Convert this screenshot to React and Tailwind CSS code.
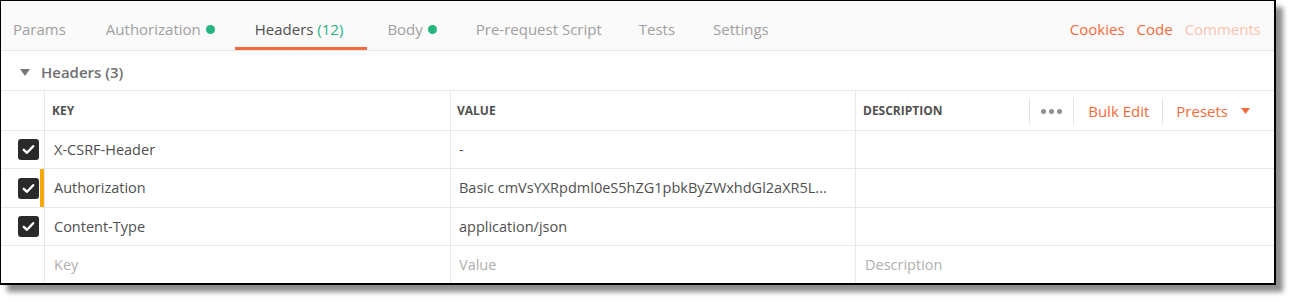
import React from "react";

function Check() {
  return (
    <div className="w-[21px] h-[21px] rounded-[3px] bg-[#2a2a2a] flex items-center justify-center">
      <svg width="13" height="11" viewBox="0 0 13 11">
        <path d="M1.8 5.8 L5 8.8 L11.2 2.2" fill="none" stroke="#fff" strokeWidth="2.4" strokeLinecap="round" strokeLinejoin="round" />
      </svg>
    </div>
  );
}

function Tab({ children, active, dot, className = "px-[20px]" }) {
  return (
    <div className={"relative h-full flex items-center pt-[8px] " + className}>
      <span className={"flex items-center gap-[5px] " + (active ? "text-[#505050]" : "text-[#a0a0a0]")}>
        {children}
        {dot && <span className="inline-block w-[9px] h-[9px] rounded-full bg-[#26b47f]" />}
      </span>
      {active && <div className="absolute left-0 right-0 bottom-0 h-[3px] bg-[#f26b3a]" />}
    </div>
  );
}

function Row({ keyText, value, marker, placeholder, h }) {
  return (
    <div className={"flex " + h}>
      <div className="relative w-[44px] border-r border-[#e8e8e8] flex items-center pl-[17px]">
        {!placeholder && <Check />}
        {marker && <div className="absolute right-0 top-0 bottom-0 w-[4px] bg-[#f5a80c]" />}
      </div>
      <div className={"w-[406px] border-r border-[#e8e8e8] flex items-center pl-[9px] " + (placeholder ? "text-[#b0b0b0]" : "text-[#505050]")}>
        {keyText}
      </div>
      <div className={"w-[405px] border-r border-[#e8e8e8] flex items-center pl-[8px] whitespace-nowrap overflow-hidden " + (placeholder ? "text-[#b0b0b0]" : "text-[#505050]")}>
        {value}
      </div>
      <div className="flex-1 flex items-center pl-[9px] text-[#b0b0b0]">
        {placeholder ? "Description" : ""}
      </div>
    </div>
  );
}

export default function App() {
  return (
    <div className="w-[1291px] h-[300px] bg-white font-['Open_Sans',sans-serif]">
      <div className="w-[1276px] h-[285px] border-t border-l border-r-2 border-b-2 border-black bg-white shadow-[7px_7px_5px_rgba(0,0,0,0.45)] flex flex-col">
        {/* Tab bar */}
        <div className="h-[50px] shrink-0 bg-[#fafafa] border-b border-[#e6e6e6] flex items-stretch text-[15px]">
          <div className="flex items-stretch -ml-[8px]">
            <Tab>Params</Tab>
            <Tab dot>Authorization</Tab>
            <Tab active className="pl-[20px] pr-[24px]">
              <span>
                Headers <span className="text-[#26b47f]">(12)</span>
              </span>
            </Tab>
            <Tab dot>Body</Tab>
            <Tab className="pl-[19px] pr-[18px]">Pre-request Script</Tab>
            <Tab className="px-[19px]">Tests</Tab>
            <Tab className="px-[19px]">Settings</Tab>
          </div>
          <div className="ml-auto flex items-center pt-[8px] pr-[13px] gap-[12px]">
            <span className="text-[#f26b3a]">Cookies</span>
            <span className="text-[#f26b3a]">Code</span>
            <span className="text-[#f8c4ae]">Comments</span>
          </div>
        </div>

        {/* Section header */}
        <div className="h-[40px] shrink-0 border-b border-[#e8e8e8] flex items-center pt-[3px] pl-[19px] gap-[11px]">
          <svg width="10" height="7" viewBox="0 0 10 7">
            <path d="M0 0 L10 0 L5 7 Z" fill="#777" />
          </svg>
          <span className="text-[15px] font-semibold text-[#707070]">Headers (3)</span>
        </div>

        {/* Table header */}
        <div className="h-[40px] shrink-0 border-b border-[#e8e8e8] flex text-[12px] font-bold text-[#505050]">
          <div className="w-[44px] border-r border-[#e8e8e8]" />
          <div className="w-[406px] border-r border-[#e8e8e8] flex items-center pl-[7px] pt-[1px]">KEY</div>
          <div className="w-[405px] border-r border-[#e8e8e8] flex items-center pl-[6px] pt-[1px]">VALUE</div>
          <div className="flex-1 flex items-center pl-[7px] pt-[1px]">
            <span>DESCRIPTION</span>
            <div className="ml-auto flex items-center font-normal text-[15px] pr-[24px]">
              <div className="h-[27px] border-l border-[#e4e4e4]" />
              <div className="flex items-center gap-[3px] pl-[11px] pr-[11px]">
                <span className="w-[5px] h-[5px] rounded-full bg-[#909090]" />
                <span className="w-[5px] h-[5px] rounded-full bg-[#909090]" />
                <span className="w-[5px] h-[5px] rounded-full bg-[#909090]" />
              </div>
              <div className="h-[27px] border-l border-[#e4e4e4]" />
              <span className="pl-[14px] pr-[13px] text-[#f26b3a]">Bulk Edit</span>
              <div className="h-[27px] border-l border-[#e4e4e4]" />
              <span className="pl-[13px] text-[#f26b3a]">Presets</span>
              <svg className="ml-[13px]" width="9" height="6" viewBox="0 0 9 6">
                <path d="M0 0 L9 0 L4.5 6 Z" fill="#f26b3a" />
              </svg>
            </div>
          </div>
        </div>

        <div className="text-[14.5px] flex-1 flex flex-col">
          <Row keyText="X-CSRF-Header" value="-" h="h-[38px] shrink-0 border-b border-[#e8e8e8]" />
          <Row keyText="Authorization" value="Basic cmVsYXRpdml0eS5hZG1pbkByZWxhdGl2aXR5L..." marker h="h-[39px] shrink-0 border-b border-[#e8e8e8]" />
          <Row keyText="Content-Type" value="application/json" h="h-[38px] shrink-0 border-b border-[#e8e8e8]" />
          <Row keyText="Key" value="Value" placeholder h="flex-1" />
        </div>
      </div>
    </div>
  );
}
